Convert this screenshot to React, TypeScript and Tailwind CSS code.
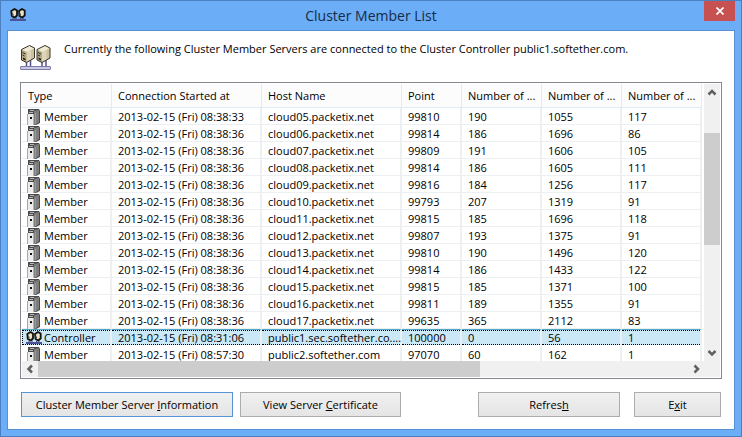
const columns = [
  { name: "Type", width: "w-[90px]" },
  { name: "Connection Started at", width: "w-[150px]" },
  { name: "Host Name", width: "w-[140px]" },
  { name: "Point", width: "w-[60px]" },
  { name: "Number of ...", width: "w-[80px]" },
  { name: "Number of ...", width: "w-[80px]" },
  { name: "Number of ...", width: "w-[80px]" },
];

const members = [
  ["Member", "2013-02-15 (Fri) 08:38:33", "cloud05.packetix.net", "99810", "190", "1055", "117"],
  ["Member", "2013-02-15 (Fri) 08:38:36", "cloud06.packetix.net", "99814", "186", "1696", "86"],
  ["Member", "2013-02-15 (Fri) 08:38:36", "cloud07.packetix.net", "99809", "191", "1606", "105"],
  ["Member", "2013-02-15 (Fri) 08:38:36", "cloud08.packetix.net", "99814", "186", "1605", "111"],
  ["Member", "2013-02-15 (Fri) 08:38:36", "cloud09.packetix.net", "99816", "184", "1256", "117"],
  ["Member", "2013-02-15 (Fri) 08:38:36", "cloud10.packetix.net", "99793", "207", "1319", "91"],
  ["Member", "2013-02-15 (Fri) 08:38:36", "cloud11.packetix.net", "99815", "185", "1696", "118"],
  ["Member", "2013-02-15 (Fri) 08:38:36", "cloud12.packetix.net", "99807", "193", "1375", "91"],
  ["Member", "2013-02-15 (Fri) 08:38:36", "cloud13.packetix.net", "99810", "190", "1496", "120"],
  ["Member", "2013-02-15 (Fri) 08:38:36", "cloud14.packetix.net", "99814", "186", "1433", "122"],
  ["Member", "2013-02-15 (Fri) 08:38:36", "cloud15.packetix.net", "99815", "185", "1371", "100"],
  ["Member", "2013-02-15 (Fri) 08:38:36", "cloud16.packetix.net", "99811", "189", "1355", "91"],
  ["Member", "2013-02-15 (Fri) 08:38:36", "cloud17.packetix.net", "99635", "365", "2112", "83"],
  ["Controller", "2013-02-15 (Fri) 08:31:06", "public1.sec.softether.co....", "100000", "0", "56", "1"],
  ["Member", "2013-02-15 (Fri) 08:57:30", "public2.softether.com", "97070", "60", "162", "1"],
];

function ServerBox() {
  return (
    <>
      <path d="M6.500 18V23M10.500 16V23" stroke="#51518a" strokeWidth="1.500" />
      <path d="M1.500 6.500L9.500 2.500L14.500 5V15L6.500 19.500L1.500 17Z" fill="#d8cfae" />
      <path d="M6.500 9L14.500 5V15L6.500 19.500Z" fill="#cdc29c" />
      <path d="M6.500 9L11 7V17L6.500 19.500Z" fill="#ded5b8" />
      <path d="M1.500 6.500L9.500 2.500L14.500 5L6.500 9Z" fill="#f1ebd6" />
      <path d="M1.500 6.500L6.500 9V19.500L1.500 17Z" fill="#b3a984" />
      <path d="M2.500 9.500L5.500 11M2.500 12L4.500 13" stroke="#38332a" />
      <path d="M3 14.500L5.500 15.700V17.500L3 16.200Z" fill="#1c1a16" />
      <path d="M1.500 6.500L9.500 2.500L14.500 5V15L6.500 19.500L1.500 17Z" fill="none" stroke="#38342b" />
    </>
  );
}

function ClusterIcon() {
  return (
    <svg viewBox="0 0 32 32" className="size-8 shrink-0" aria-hidden="true">
      <ServerBox />
      <g transform="translate(15.500 0)">
        <ServerBox />
      </g>
      <rect x=".5" y="23.500" width="30" height="3" rx=".5" fill="#c8c8e2" stroke="#7c7ca4" />
    </svg>
  );
}

function SmallClusterIcon() {
  return (
    <svg viewBox="0 0 16 16" className="size-4 shrink-0" aria-hidden="true">
      <path d="M3 11V12.500M6 10V12.500M10.500 11V12.500M13 10V12.500" stroke="#3f4380" />
      <path
        d="M1.300 4L4.500 2L7 3.500V8.500L4.500 10.500L1.800 9Z"
        fill="#e9e2cd"
        stroke="#14120d"
        strokeWidth="1.800"
        strokeLinejoin="round"
      />
      <path
        d="M9 4L12 2L14.700 3.500V8.500L12 10.500L9.500 9Z"
        fill="#e9e2cd"
        stroke="#14120d"
        strokeWidth="1.800"
        strokeLinejoin="round"
      />
      <path d="M2 5.500L3.500 7V9.500L2 8.500ZM9.500 5.500L11 7V9.500L9.500 8.500Z" fill="#55503f" />
      <rect x="0" y="12" width="16" height="2" fill="#4e5397" />
    </svg>
  );
}

function ServerIcon() {
  return (
    <svg viewBox="0 0 16 16" className="size-4 shrink-0" aria-hidden="true">
      <path d="M2 0H13L14 2V14L10 16H2Z" fill="#4a4a4a" />
      <path d="M8 2L13 1V13L9 16H8Z" fill="#7d7d7d" />
      <path d="M9.500 4V15" stroke="#9a9a9a" />
      <path d="M4 1.500H8M3 3.500H7" stroke="#b9b9b9" />
      <path d="M2 5H7V16H2Z" fill="#ececec" />
      <path d="M1.500 5V16" stroke="#a8a8a8" />
      <path d="M7.500 5V16" stroke="#b4b4b4" />
      <rect x="4" y="8" width="2" height="2" fill="#111" />
    </svg>
  );
}

function Chevron({ d }: { d: string }) {
  return (
    <svg viewBox="0 0 16 16" className="size-4 shrink-0" aria-hidden="true">
      <path d={d} fill="none" stroke="#606060" strokeWidth="2.500" />
    </svg>
  );
}

const buttonClass =
  "h-[25px] border bg-gradient-to-b from-[#f0f0f0] to-[#e5e5e5] pt-px text-center whitespace-nowrap";

export default function App() {
  return (
    <div className="flex min-h-screen flex-col border border-[#4a80c0] bg-[#6badf6] px-1.5 pb-1.5 font-['Open_Sans','Noto_Sans',sans-serif] text-[11px] text-black">
      <header className="flex h-[29px] items-start justify-between">
        <div className="flex w-12 pt-1.5 pl-[3px]">
          <SmallClusterIcon />
        </div>
        <h1 className="text-sm leading-[29px] text-[#152c47]">Cluster Member List</h1>
        <div className="flex w-12 justify-end">
          <button aria-label="Close" className="flex h-5 w-[31px] items-center justify-center bg-[#c75050]">
            <svg viewBox="0 0 8 8" className="size-2" aria-hidden="true">
              <path d="M.5 .5L7.500 7.500M7.500 .5L.5 7.500" stroke="#fff" strokeWidth="1.700" />
            </svg>
          </button>
        </div>
      </header>

      <main className="flex flex-1 flex-col border border-[#5791d4] bg-white px-3 pb-3">
        <div className="flex h-[51px] gap-3 pt-3">
          <ClusterIcon />
          <p className="leading-3">
            Currently the following Cluster Member Servers are connected to the Cluster Controller public1.softether.com.
          </p>
        </div>

        <section className="border border-[#828790] bg-white p-px">
          <div className="flex">
            <div className="h-[277px] min-w-0 flex-1 overflow-hidden">
              <table className="w-[680px] table-fixed border-separate border-spacing-0 text-left">
                <thead>
                  <tr className="h-6 bg-[#fcfcfc]">
                    {columns.map((column, i) => (
                      <th
                        key={i}
                        className={`${column.width} border-r border-b border-[#e2ebf3] p-0 pt-0.5 pl-1.5 font-normal whitespace-nowrap`}
                      >
                        {column.name}
                      </th>
                    ))}
                  </tr>
                </thead>
                <tbody>
                  {members.map((member) => {
                    const selected = member[0] === "Controller";
                    return (
                      <tr key={member[2]}>
                        {member.map((value, i) => (
                          <td
                            key={i}
                            className={
                              selected
                                ? "border-t border-r-2 border-b border-t-[#4fa8c6] border-r-[#edf0f3] border-b-white bg-[#cbe8f6] p-0 whitespace-nowrap"
                                : "border-r-2 border-b border-[#edf0f3] p-0 whitespace-nowrap"
                            }
                          >
                            <div
                              className={
                                selected
                                  ? `flex h-[15px] items-center gap-0.5 border-y border-dotted border-black pt-px ${i === 0 ? "border-l pl-[3px]" : "pl-1.5"}`
                                  : `flex h-4 items-center gap-0.5 pt-0.5 ${i === 0 ? "pl-1" : "pl-1.5"}`
                              }
                            >
                              {i === 0 && (selected ? <SmallClusterIcon /> : <ServerIcon />)}
                              <span>{value}</span>
                            </div>
                          </td>
                        ))}
                      </tr>
                    );
                  })}
                </tbody>
              </table>
            </div>
            <div className="flex w-4 flex-col items-center bg-[#f0f0f0]">
              <Chevron d="M4.500 10.500L8 7L11.500 10.500" />
              <div className="mt-[33px] h-28 w-full bg-[#cdcdcd]" />
              <div className="mt-auto">
                <Chevron d="M4.500 6L8 9.500L11.500 6" />
              </div>
            </div>
          </div>
          <div className="flex h-4 bg-[#f0f0f0] pr-4">
            <Chevron d="M10 4.500L6.500 8L10 11.500" />
            <div className="flex-1">
              <div className="h-full w-[68%] bg-[#cdcdcd]" />
            </div>
            <Chevron d="M6.500 4.500L10 8L6.500 11.500" />
          </div>
        </section>

        <div className="flex gap-[7px] px-px pt-[13px]">
          <button className={`${buttonClass} w-[212px] border-[#5694d8]`}>
            Cluster Member Server <u>I</u>nformation
          </button>
          <button className={`${buttonClass} w-[161px] border-[#acacac]`}>
            View Server <u>C</u>ertificate
          </button>
          <div className="ml-auto flex gap-3.5">
            <button className={`${buttonClass} w-[142px] border-[#acacac]`}>
              Refres<u>h</u>
            </button>
            <button className={`${buttonClass} w-[87px] border-[#acacac]`}>
              E<u>x</u>it
            </button>
          </div>
        </div>
      </main>
    </div>
  );
}
